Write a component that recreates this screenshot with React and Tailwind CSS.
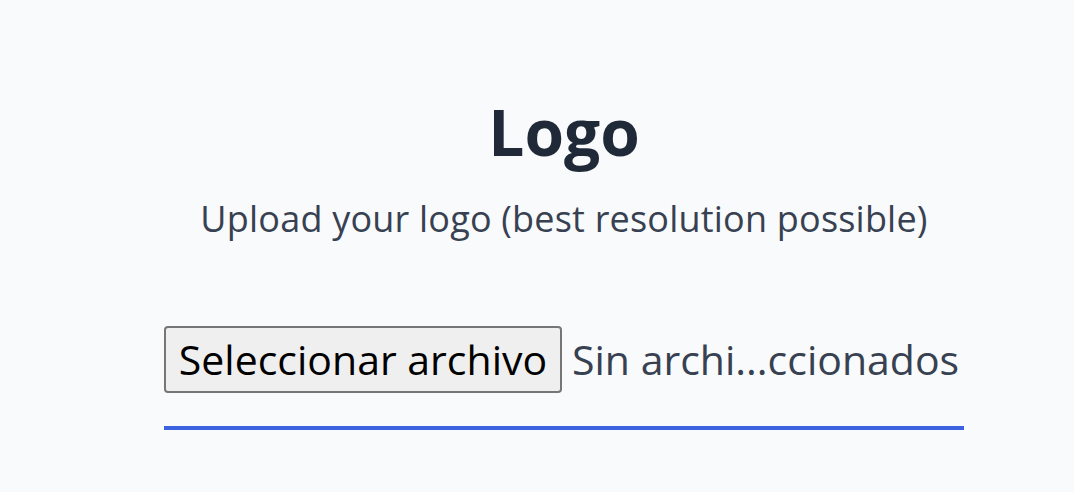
const App = () => {
  return (
    <div className="min-h-screen w-full bg-[#f9fafb] font-['Open_Sans',sans-serif]">
      {/* Upload section */}
      <div className="ml-[164px] w-[800px] pt-[92px] flex flex-col items-center">
        <h1 className="text-[64px] leading-[80px] font-bold text-[#1f2937]">
          Logo
        </h1>
        <p className="mt-[27px] text-[36px] leading-[40px] tracking-[0.2px] text-[#374151] whitespace-nowrap">
          Upload your logo (best resolution possible)
        </p>

        {/* File input */}
        <div className="mt-[87px] w-full flex items-center gap-[10px]">
          <button className="shrink-0 h-[67px] w-[398px] rounded-[4px] border-2 border-[#767676] bg-[#efefef] text-[41px] leading-none text-black whitespace-nowrap">
            Seleccionar archivo
          </button>
          <span className="text-[41px] leading-none text-[#374151] whitespace-nowrap">
            Sin archi...ccionados
          </span>
        </div>
        <div className="mt-[33px] w-full h-[4px] bg-[#3b63e0]" />
      </div>
    </div>
  );
};

export default App;
